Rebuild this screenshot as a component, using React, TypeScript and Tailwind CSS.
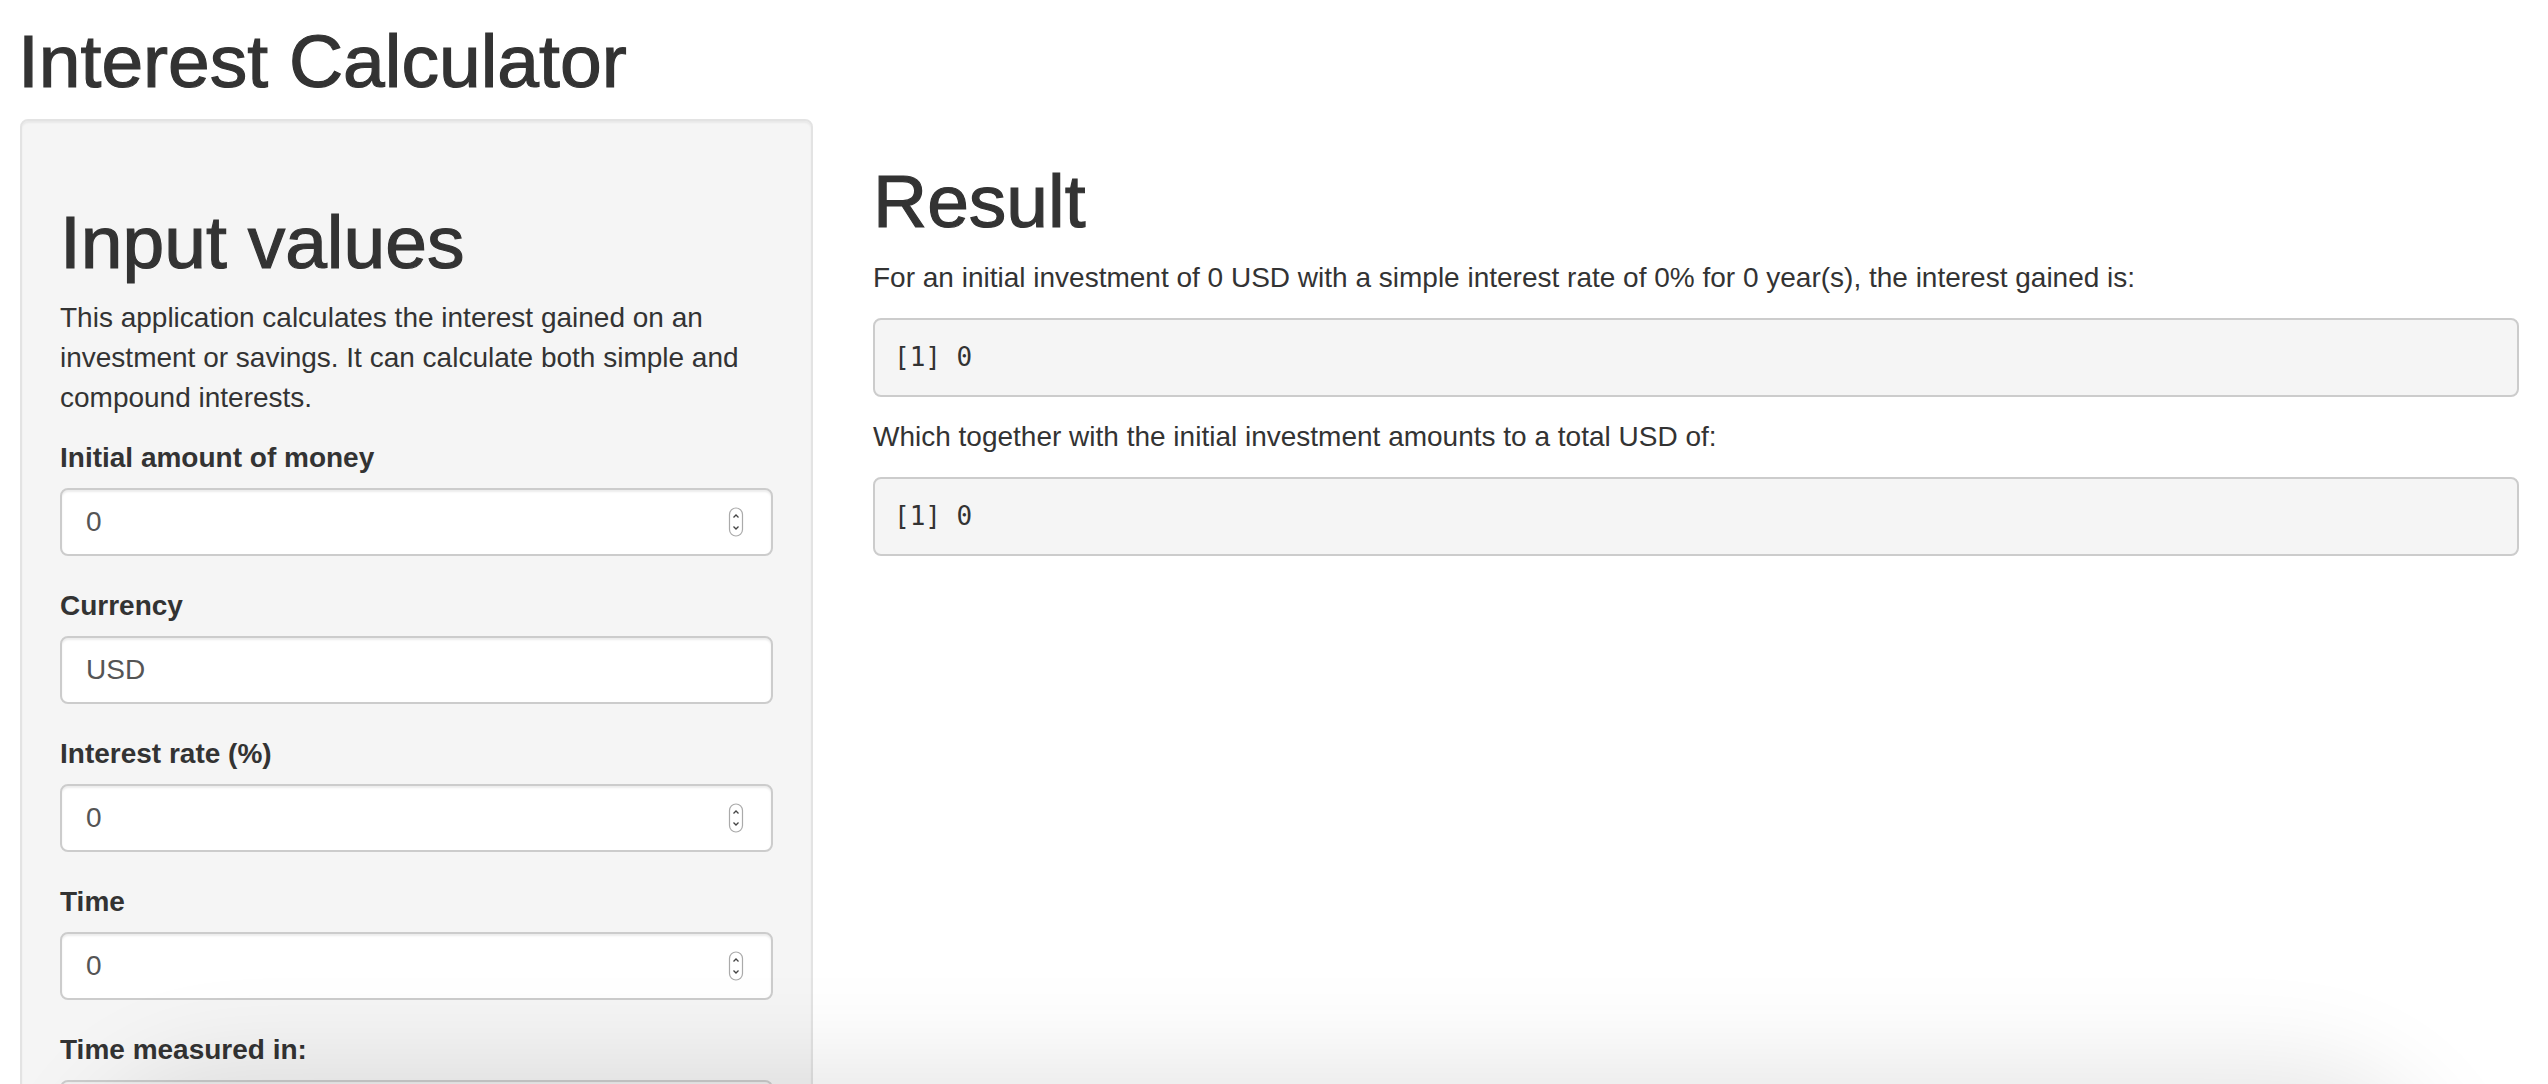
import React from "react";

function Spinner() {
  return (
    <svg width="16" height="30" viewBox="0 0 16 30" className="shrink-0 mr-[3px]">
      <rect x="1.5" y="1" width="13" height="28" rx="6.5" fill="#fff" stroke="#aaa" strokeWidth="1.2" />
      <path d="M5.5 10.5 L8 8 L10.5 10.5" fill="none" stroke="#444" strokeWidth="1.3" />
      <path d="M5.5 19.5 L8 22 L10.5 19.5" fill="none" stroke="#444" strokeWidth="1.3" />
    </svg>
  );
}

function Field({ label, value, number }: { label: string; value: string; number?: boolean }) {
  return (
    <div className="mb-[30px]">
      <label className="block font-bold mb-[10px] leading-[40px]">{label}</label>
      <div className="h-[68px] border-2 border-[#ccc] rounded-[8px] bg-white px-[24px] flex items-center justify-between text-[28px] leading-[40px] text-[#555] shadow-[inset_0_2px_2px_rgba(0,0,0,0.075)]">
        <span>{value}</span>
        {number ? <Spinner /> : null}
      </div>
    </div>
  );
}

function Pre({ children }: { children: React.ReactNode }) {
  return (
    <pre className="mb-[20px] p-[19px] border-2 border-[#ccc] rounded-[8px] bg-[#f5f5f5] text-[26px] leading-[37px] text-[#333] font-['DejaVu_Sans_Mono','Liberation_Mono',monospace]">
      {children}
    </pre>
  );
}

export default function App() {
  return (
    <div className="relative h-[1084px] w-full overflow-hidden bg-white text-[#333] text-[28px] leading-[40px] font-['Liberation_Sans',Arial,Helvetica,sans-serif]">
      <h1 className="ml-[18px] mt-[21px] mb-[18px] text-[75px] leading-[80px] font-normal [-webkit-text-stroke:1.2px_#333]">Interest Calculator</h1>
      <div className="flex items-start">
        <aside className="ml-[20px] w-[793px] shrink-0 bg-[#f5f5f5] border-2 border-[#e3e3e3] rounded-[8px] p-[38px] shadow-[inset_0_2px_2px_rgba(0,0,0,0.05)]">
          <h1 className="mt-[43px] mb-[16px] text-[75px] leading-[80px] font-normal [-webkit-text-stroke:1.2px_#333]">Input values</h1>
          <p className="mb-[20px]">
            This application calculates the interest gained on an
            <br />
            investment or savings. It can calculate both simple and
            <br />
            compound interests.
          </p>
          <Field label="Initial amount of money" value="0" number />
          <Field label="Currency" value="USD" />
          <Field label="Interest rate (%)" value="0" number />
          <Field label="Time" value="0" number />
          <Field label="Time measured in:" value="" />
        </aside>
        <main className="ml-[60px] w-[1646px] shrink-0">
          <h1 className="mt-[42px] mb-[17px] text-[75px] leading-[80px] font-normal [-webkit-text-stroke:1.2px_#333]">Result</h1>
          <p className="mb-[20px]">
            For an initial investment of 0 USD with a simple interest rate of 0% for 0 year(s), the interest gained is:
          </p>
          <Pre>[1] 0</Pre>
          <p className="mb-[20px]">Which together with the initial investment amounts to a total USD of:</p>
          <Pre>[1] 0</Pre>
        </main>
      </div>
      <div className="pointer-events-none absolute left-[130px] right-[160px] top-[1124px] h-[200px] rounded-full shadow-[0_0_100px_60px_rgba(0,0,0,0.1)]" />
    </div>
  );
}
